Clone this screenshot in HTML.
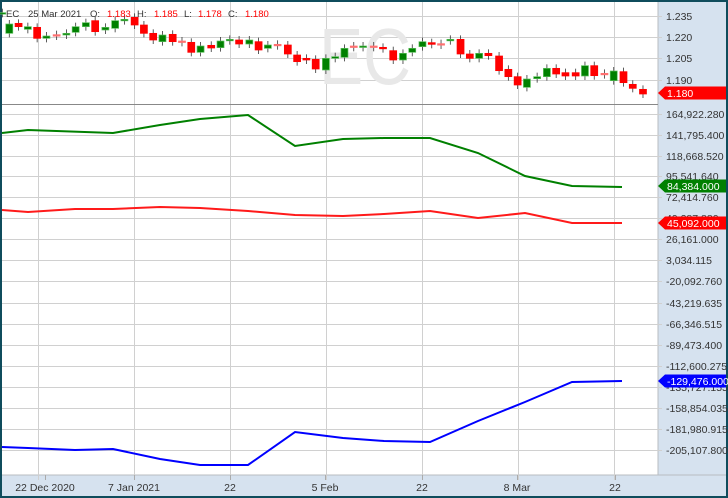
<!DOCTYPE html>
<html><head><meta charset="utf-8"><style>
body{margin:0;width:728px;height:498px;overflow:hidden;background:#0f4c5c;font-family:"Liberation Sans",sans-serif}
svg{position:absolute;left:0;top:0}
</style></head><body>
<svg id="s" width="728" height="498" xmlns="http://www.w3.org/2000/svg" font-family="Liberation Sans, sans-serif" font-size="10.5">
<rect x="2" y="2" width="724" height="494" fill="#fff"/>
<rect x="658" y="2" width="68" height="494" fill="#d6e2ef"/>
<rect x="2" y="475" width="724" height="21" fill="#d6e2ef"/>
<line x1="658" y1="2" x2="658" y2="475" stroke="#b8bcc2"/>
<line x1="2" y1="475" x2="726" y2="475" stroke="#b8bcc2"/>
<g id="grid" stroke="#d0d0d0" stroke-width="1"></g>
<text x="365" y="84" font-size="80" fill="#e8e8e8" text-anchor="middle" textLength="92" lengthAdjust="spacingAndGlyphs">EC</text>
<g id="c"></g>
<line x1="2" y1="104.5" x2="658" y2="104.5" stroke="#888"/>
<polyline fill="none" stroke="#008000" stroke-width="2" points="2,133 28,130 113,133 160,125 200,119 248,115 295,146 343,139 384,138 430,138 478,153 525,176 572,186 622,187"/>
<polyline fill="none" stroke="#ff1a1a" stroke-width="2" points="2,210 28,212 75,209 113,209 160,207 200,208 248,211 295,215 343,216 384,214 430,211 478,218 525,213 572,223 622,223"/>
<polyline fill="none" stroke="#0000ff" stroke-width="2" points="2,447 28,448 75,450 113,449 160,459 200,465 248,465 295,432 343,438 384,441 430,442 478,421 525,402 572,382 622,381"/>
<g font-size="9.5">
<text x="6" y="17" fill="#333">EC</text>
<text x="28" y="17" fill="#333">25 Mar 2021</text>
<text x="90" y="17" fill="#333">O:</text><text x="107" y="17" fill="#f00">1.183</text>
<text x="137" y="17" fill="#333">H:</text><text x="154" y="17" fill="#f00">1.185</text>
<text x="184" y="17" fill="#333">L:</text><text x="198" y="17" fill="#f00">1.178</text>
<text x="228" y="17" fill="#333">C:</text><text x="245" y="17" fill="#f00">1.180</text>
</g>
<g id="ax" fill="#333"></g>
</svg>
<script>
var ns="http://www.w3.org/2000/svg";
function el(p,t,a,txt){var e=document.createElementNS(ns,t);for(var k in a)e.setAttribute(k,a[k]);if(txt)e.textContent=txt;document.getElementById(p).appendChild(e);return e;}
[38,134,230,326,422,518,614].forEach(function(x){el('grid','line',{x1:x+.5,y1:2,x2:x+.5,y2:480});});
[16,37,58,80].forEach(function(y){el('grid','line',{x1:2,y1:y+.5,x2:662,y2:y+.5});});
var lv=[["164,922.280",114],["141,795.400",135],["118,668.520",156],["95,541.640",176],["72,414.760",197],["49,287.880",218],["26,161.000",239],["3,034.115",260],["-20,092.760",281],["-43,219.635",303],["-66,346.515",324],["-89,473.400",345],["-112,600.275",366],["-135,727.155",387],["-158,854.035",408],["-181,980.915",429],["-205,107.800",450]];
lv.forEach(function(l){el('grid','line',{x1:2,y1:l[1]+.5,x2:662,y2:l[1]+.5});el('ax','text',{x:666,y:l[1]+4},l[0]);});
[["1.235",16],["1.220",37],["1.205",58],["1.190",80]].forEach(function(l){el('ax','text',{x:666,y:l[1]+4},l[0]);});
[["22 Dec 2020",45],["7 Jan 2021",134],["22",230],["5 Feb",325],["22",422],["8 Mar",517],["22",615]].forEach(function(l){el('ax','text',{x:l[1],y:491,'text-anchor':'middle'},l[0]);el('grid','line',{x1:l[1]+.5,y1:475,x2:l[1]+.5,y2:480,stroke:'#aaa'});});
var C=[[5,38,40,'g'],[20,72,100,'g'],[40,70,80,'r'],[60,80,88,'g'],[80,82,115,'r'],[100,108,115,'g'],[122,104,108,'p'],[143,100,105,'g'],[163,80,97,'g'],[185,68,80,'g'],[205,62,95,'r'],[227,82,90,'g'],[248,62,85,'g'],[268,58,62,'g'],[290,52,75,'r'],[310,75,100,'r'],[330,100,120,'r'],[350,105,125,'g'],[372,103,125,'r'],[392,123,127,'p'],[412,127,157,'r'],[432,138,157,'g'],[455,136,144,'r'],[475,123,143,'g'],[495,118,122,'g'],[515,120,132,'r'],[537,120,132,'g'],[557,125,150,'r'],[577,135,145,'g'],[598,133,137,'p'],[620,135,162,'r'],[640,165,185,'r'],[660,175,180,'r'],[680,178,207,'r'],[702,175,210,'g'],[722,170,175,'g'],[742,145,172,'g'],[762,138,142,'p'],[782,138,142,'g'],[805,138,142,'p'],[825,142,146,'r'],[847,152,180,'r'],[868,160,180,'g'],[888,145,157,'g'],[910,125,140,'g'],[930,128,133,'r'],[950,131,135,'p'],[970,118,122,'g'],[992,118,162,'r'],[1012,162,175,'r'],[1032,160,175,'g'],[1052,160,167,'r'],[1075,168,212,'r'],[1095,208,230,'r'],[1115,230,255,'r'],[1135,237,262,'g'],[1157,230,236,'g'],[1178,205,230,'g'],[1198,205,222,'r'],[1218,218,228,'r'],[1240,218,228,'r'],[1260,197,228,'g'],[1280,197,227,'r'],[1302,220,224,'p'],[1322,213,242,'g'],[1343,215,248,'r'],[1363,253,265,'r'],[1385,268,282,'r']];
var col={g:'#008000',r:'#ff0000',p:'#ff7070'};
C.forEach(function(c){var x=c[0]/2.154,y1=c[1]/3,y2=c[2]/3,f=col[c[3]];
el('c','line',{x1:x,y1:y1-4,x2:x,y2:y2+4,stroke:'#333','stroke-width':.8});
el('c','rect',{x:x-3.5,y:y1,width:7,height:Math.max(y2-y1,1.5),fill:f,stroke:c[3]=='g'?'#5cbf5c':f,'stroke-width':.7});});
function tag(y,txt,f){el('ax','polygon',{points:(658)+','+y+' '+(665)+','+(y-6.5)+' 726,'+(y-6.5)+' 726,'+(y+6.5)+' 665,'+(y+6.5),fill:f});el('ax','text',{x:667,y:y+4,fill:'#fff'},txt);}
tag(93,"1.180","#ff0000");tag(186,"84,384.000","#008000");tag(223,"45,092.000","#ff0000");tag(381,"-129,476.000","#0000ff");
</script>
</body></html>
